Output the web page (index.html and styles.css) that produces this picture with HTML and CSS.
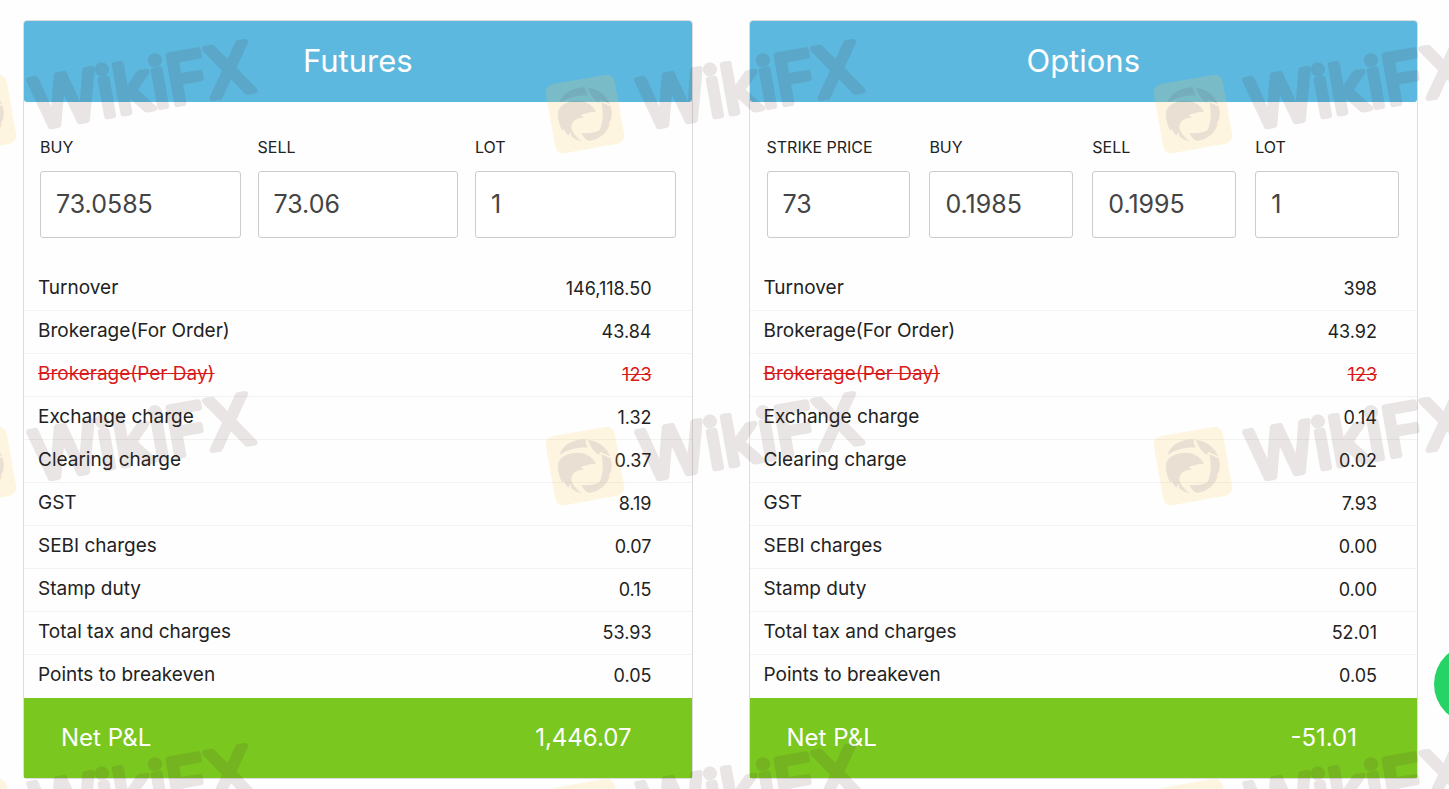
FILE: index.html
```html
<!DOCTYPE html>
<html lang="en">
<head>
  <meta charset="UTF-8" />
  <meta name="viewport" content="width=device-width, initial-scale=1.0" />
  <title>Brokerage Calculator</title>
  <link rel="stylesheet" href="styles.css">
</head>
<body>
  <main class="calculators">
    <section class="card">
      <h2 class="card-title">Futures</h2>
      <form class="fields">
        <div class="field">
          <label for="futBuy">BUY</label>
          <input type="text" id="futBuy" value="73.0585" />
        </div>
        <div class="field">
          <label for="futSell">SELL</label>
          <input type="text" id="futSell" value="73.06" />
        </div>
        <div class="field">
          <label for="futLot">LOT</label>
          <input type="text" id="futLot" value="1" />
        </div>
      </form>
      <table class="charges">
        <tbody>
          <tr><th scope="row">Turnover</th><td>146,118.50</td></tr>
          <tr><th scope="row">Brokerage(For Order)</th><td>43.84</td></tr>
          <tr class="struck"><th scope="row">Brokerage(Per Day)</th><td>123</td></tr>
          <tr><th scope="row">Exchange charge</th><td>1.32</td></tr>
          <tr><th scope="row">Clearing charge</th><td>0.37</td></tr>
          <tr><th scope="row">GST</th><td>8.19</td></tr>
          <tr><th scope="row">SEBI charges</th><td>0.07</td></tr>
          <tr><th scope="row">Stamp duty</th><td>0.15</td></tr>
          <tr><th scope="row">Total tax and charges</th><td>53.93</td></tr>
          <tr><th scope="row">Points to breakeven</th><td>0.05</td></tr>
        </tbody>
      </table>
      <div class="net">
        <span>Net P&amp;L</span>
        <span>1,446.07</span>
      </div>
    </section>

    <section class="card">
      <h2 class="card-title">Options</h2>
      <form class="fields fields-four">
        <div class="field">
          <label for="optStrike">STRIKE PRICE</label>
          <input type="text" id="optStrike" value="73" />
        </div>
        <div class="field">
          <label for="optBuy">BUY</label>
          <input type="text" id="optBuy" value="0.1985" />
        </div>
        <div class="field">
          <label for="optSell">SELL</label>
          <input type="text" id="optSell" value="0.1995" />
        </div>
        <div class="field">
          <label for="optLot">LOT</label>
          <input type="text" id="optLot" value="1" />
        </div>
      </form>
      <table class="charges">
        <tbody>
          <tr><th scope="row">Turnover</th><td>398</td></tr>
          <tr><th scope="row">Brokerage(For Order)</th><td>43.92</td></tr>
          <tr class="struck"><th scope="row">Brokerage(Per Day)</th><td>123</td></tr>
          <tr><th scope="row">Exchange charge</th><td>0.14</td></tr>
          <tr><th scope="row">Clearing charge</th><td>0.02</td></tr>
          <tr><th scope="row">GST</th><td>7.93</td></tr>
          <tr><th scope="row">SEBI charges</th><td>0.00</td></tr>
          <tr><th scope="row">Stamp duty</th><td>0.00</td></tr>
          <tr><th scope="row">Total tax and charges</th><td>52.01</td></tr>
          <tr><th scope="row">Points to breakeven</th><td>0.05</td></tr>
        </tbody>
      </table>
      <div class="net">
        <span>Net P&amp;L</span>
        <span>-51.01</span>
      </div>
    </section>
  </main>

  <button class="chat-button" type="button" aria-label="Chat"></button>

  <!-- repeated watermark -->
  <svg class="watermark" width="100%" height="100%" aria-hidden="true">
    <defs>
      <pattern id="mark" x="-68" y="30" width="608" height="352" patternUnits="userSpaceOnUse">
        <rect class="mark-badge" x="-35" y="-35" width="70" height="70" rx="8" transform="translate(45 84) rotate(-10)" />
        <g class="mark-bird" transform="translate(45 84) scale(0.333) translate(-141 -137)">
          <path d="M64 104 C74 76 100 57 143 57 C142 66 145 75 150 82 C118 80 90 88 64 104 Z" />
          <path d="M150 58 C182 63 206 80 216 108 L186 94 L183 104 C168 94 156 78 150 58 Z" />
          <path d="M190 102 L218 114 C226 140 220 160 205 177 L184 187 C196 160 197 130 190 102 Z" />
          <path d="M130 194 C160 197 190 188 216 166 C206 195 184 214 152 218 C142 213 134 205 130 194 Z" />
          <path d="M60 132 C62 110 90 97 120 97 C148 98 166 112 174 132 C160 129 148 135 128 140 L138 148 C118 148 100 158 100 176 C102 192 114 206 132 219 C118 217 108 212 100 204 L98 190 L92 202 C84 196 80 190 78 182 L72 186 C63 170 59 150 60 132 Z" />
        </g>
        <text class="mark-text" x="0" y="0" transform="translate(104 99) rotate(-10)">WikiFX</text>
      </pattern>
    </defs>
    <rect width="100%" height="100%" fill="url(#mark)" />
  </svg>
</body>
</html>
```

FILE: styles.css
```css
* { box-sizing: border-box; }
body {
  margin: 0;
  font-family: Inter, "Open Sans", sans-serif;
  color: #222;
  background: #fefefe;
  position: relative;
}
.calculators {
  display: flex;
  gap: 56px;
  padding: 20px 31px 10px 23px;
}
.card {
  flex: 1;
  border: 1px solid #ddd;
  border-radius: 4px;
  background: #fefefe;
}
.card-title {
  margin: 0;
  padding-bottom: 2px;
  background: #5cb8de;
  color: white;
  font-size: 31px;
  font-weight: 400;
  line-height: 79px;
  text-align: center;
  border-radius: 3px;
}
.fields {
  display: flex;
  gap: 17px;
  padding: 32px 16px 30px;
}
.fields-four { gap: 19px; padding-left: 17px; padding-right: 18px; }
.field {
  flex: 1;
  min-width: 0;
}
.field label {
  display: block;
  font-size: 16px;
  line-height: 26px;
  margin-bottom: 11px;
}
.field input {
  display: block;
  width: 100%;
  height: 67px;
  padding: 0 15px 2px;
  border: 1px solid #ccc;
  border-radius: 3px;
  background: white;
  color: #444;
  font-family: inherit;
  font-size: 25px;
}
.charges {
  width: 100%;
  border-spacing: 0;
  font-size: 18px;
  line-height: 24px;
}
.charges th, .charges td {
  height: 43px;
  padding: 0 14px 2px;
  border-bottom: 1px solid #f2f2f2;
  font-size: 19px;
  font-weight: 400;
  text-align: left;
}
.charges td {
  padding: 0 40px 0 0;
  font-size: 18px;
  text-align: right;
}
.charges tr:last-child > * { border-bottom-color: transparent; }
.struck { color: #d81a1a; text-decoration: line-through; }
.net {
  display: flex;
  justify-content: space-between;
  padding: 0 60px 0 37px;
  background: #79c71f;
  color: white;
  font-size: 24px;
  line-height: 80px;
}
.chat-button {
  position: fixed;
  right: -65px;
  bottom: 65px;
  width: 80px;
  height: 80px;
  border: none;
  border-radius: 50%;
  background: #25d366;
  cursor: pointer;
}

/* watermark */
.watermark {
  position: absolute;
  top: 0;
  left: 0;
  pointer-events: none;
}
.mark-badge { fill: #ffd060; opacity: 0.18; }
.mark-bird { fill: #5a4a70; opacity: 0.13; }
.mark-text {
  font-family: Inter, sans-serif;
  font-size: 68px;
  font-weight: 400;
  fill: #552a2a;
  stroke: #552a2a;
  stroke-width: 6;
  stroke-linejoin: round;
  opacity: 0.12;
}
```
